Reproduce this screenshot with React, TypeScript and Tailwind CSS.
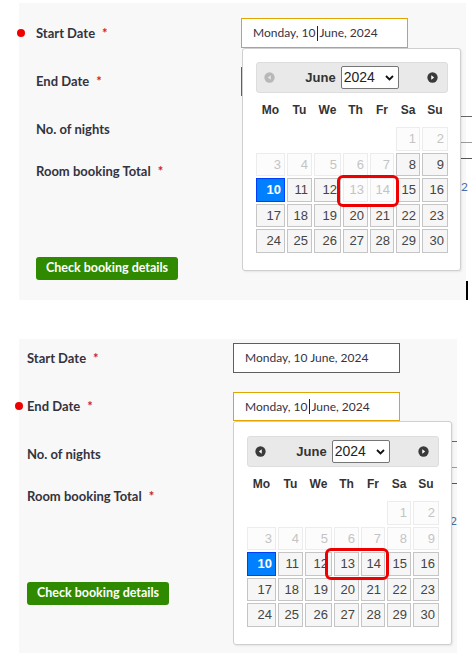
import React from 'react';

type Variant = 'start' | 'end';

const cells: (number | null)[] = [null, null, null, null, null, ...Array.from({ length: 30 }, (_, i) => i + 1)];
const dayNames = ['Mo', 'Tu', 'We', 'Th', 'Fr', 'Sa', 'Su'];

function CircleArrow({ dir, muted }: { dir: 'left' | 'right'; muted?: boolean }) {
  return (
    <svg width="11" height="11" viewBox="0 0 16 16">
      <circle cx="8" cy="8" r="7.5" fill={muted ? '#b8b8b8' : '#3a3a3a'} />
      {dir === 'left' ? (
        <path d="M9.8 4.6 L5.6 8 L9.8 11.4 Z" fill={muted ? '#e6e6e6' : '#fff'} />
      ) : (
        <path d="M6.2 4.6 L10.4 8 L6.2 11.4 Z" fill="#fff" />
      )}
    </svg>
  );
}

function DatePicker({ variant }: { variant: Variant }) {
  const isDisabled = (d: number) =>
    variant === 'start' ? d <= 7 || d === 13 || d === 14 : d <= 9;

  return (
    <div
      className={
        variant === 'start'
          ? 'absolute left-[1px] top-full z-10 w-[219px] h-[223px] bg-white border border-[#cfcfcf] rounded-[3px] pt-[13px] pl-[13px] shadow-[1px_1px_2px_rgba(0,0,0,0.08)]'
          : 'absolute left-0 top-full z-10 w-[219px] h-[224px] bg-white border border-[#cfcfcf] rounded-[3px] pt-[14px] pl-[13px] shadow-[1px_1px_2px_rgba(0,0,0,0.08)]'
      }
    >
      {/* header */}
      <div className="relative flex items-center justify-center w-[192px] h-[31px] bg-[#e9e9e9] border border-[#dddddd] rounded-[3px] font-['Liberation_Sans',Arial,sans-serif]">
        <span className="absolute left-[7px] top-[9px]">
          <CircleArrow dir="left" muted={variant === 'start'} />
        </span>
        <span className="text-[13px] font-bold text-[#333333] mr-[5px]">June</span>
        <div className="flex items-center justify-between w-[58px] h-[23px] bg-white border border-[#767676] rounded-[2px] pl-[2px] pr-[4px] text-[14px] text-[#222222]">
          <span>2024</span>
          <svg width="9" height="6" viewBox="0 0 9 6">
            <path d="M1 1 L4.5 4.5 L8 1" fill="none" stroke="#111" strokeWidth="1.8" />
          </svg>
        </div>
        <span className="absolute right-[9px] top-[9px]">
          <CircleArrow dir="right" />
        </span>
      </div>

      {/* week days */}
      <div className="grid grid-cols-[29px_25px_27px_25px_24px_24px_26px] gap-x-[2px] h-[34px] items-center font-['Liberation_Sans',Arial,sans-serif] text-[12px] font-bold text-[#333333]">
        {dayNames.map((d) => (
          <div key={d} className="text-center">
            {d}
          </div>
        ))}
      </div>

      {/* days */}
      <div className="grid grid-cols-[29px_25px_27px_25px_24px_24px_26px] gap-x-[2px] gap-y-[2px] auto-rows-[23.5px] font-['Liberation_Sans',Arial,sans-serif] text-[13px]">
        {cells.map((d, i) => {
          if (d === null) return <div key={i} />;
          let cls = 'border border-[#c5c5c5] bg-[#f6f6f6] text-[#454545]';
          if (d === 10) cls = 'border border-[#003eff] bg-[#007fff] text-white font-bold';
          else if (isDisabled(d)) cls = 'border border-[#ececec] bg-[#fcfcfc] text-[#c4c4c4]';
          return (
            <div key={i} className={'flex items-center justify-end pr-[3px] ' + cls}>
              {d}
            </div>
          );
        })}
      </div>

      {/* red annotation box */}
      <div
        className={
          variant === 'start'
            ? 'absolute left-[94px] top-[126px] w-[62px] h-[32px] border-[3px] border-[#ee0000] rounded-[6px]'
            : 'absolute left-[91px] top-[126px] w-[64px] h-[32px] border-[3px] border-[#ee0000] rounded-[6px]'
        }
      />
    </div>
  );
}

function DateInput({
  focused,
  tall,
  covered,
  children,
}: {
  focused?: boolean;
  tall?: boolean;
  covered?: boolean;
  children?: React.ReactNode;
}) {
  return (
    <div className="relative">
      <div
        className={
          (focused ? 'border-[#e2a500] ' : 'border-[#5f5f5f] ') +
          (tall ? 'h-[30px] ' : 'h-[29px] ') +
          "flex items-center w-[167px] bg-white border pl-[11px] font-['Lato',sans-serif] text-[12px] text-[#333344]"
        }
      >
        {covered ? null : focused ? (
          <>
            <span>Monday, 10</span>
            <span className="inline-block w-[1px] h-[15px] bg-[#222222] mx-[1.5px]" />
            <span>June, 2024</span>
          </>
        ) : (
          <span>Monday, 10 June, 2024</span>
        )}
      </div>
      {children}
    </div>
  );
}

function Label({ text, required, dot, dotClass }: { text: string; required?: boolean; dot?: boolean; dotClass?: string }) {
  return (
    <div className="relative font-['Lato',sans-serif] text-[13px] font-bold text-[#333340]">
      {dot && <span className={dotClass} />}
      {text}
      {required && <span className="ml-[7px] text-[#cc1f1f]">*</span>}
    </div>
  );
}

function BookingPanel({ variant }: { variant: Variant }) {
  const isStart = variant === 'start';
  const labelCol = isStart ? 'w-[205px] shrink-0' : 'w-[206px] shrink-0';
  const dotClass = isStart
    ? 'absolute left-[-19px] top-[5px] w-[8px] h-[8px] rounded-full bg-[#ee0000]'
    : 'absolute left-[-12px] top-[5px] w-[8px] h-[8px] rounded-full bg-[#ee0000]';
  // the parts of the form that lie under the date picker
  const hiddenBox = isStart ? 'w-[300px]' : 'w-[164px]';

  return (
    <div
      className={
        isStart
          ? 'relative ml-[19px] w-[447px] h-[297px] bg-[#f8f8f8] pt-[15px] pl-[17px]'
          : 'relative ml-[19px] w-[438px] h-[314px] bg-[#f8f8f8] pt-[4px] pl-[8px]'
      }
    >
      <div className="flex items-center h-[30px] pt-[2px]">
        <div className={labelCol}>
          <Label text="Start Date" required dot={isStart} dotClass={dotClass} />
        </div>
        <div className="relative z-20 -mt-[2px]">
          <DateInput focused={isStart} tall>
            {isStart && <DatePicker variant="start" />}
          </DateInput>
        </div>
      </div>

      <div className="flex items-center h-[29px] mt-[19px]">
        <div className={labelCol}>
          <Label text="End Date" required dot={!isStart} dotClass={dotClass} />
        </div>
        <div className="relative z-10">
          <DateInput focused={!isStart} covered={isStart}>
            {!isStart && <DatePicker variant="end" />}
          </DateInput>
        </div>
      </div>

      <div className="flex items-center h-[27px] mt-[20px]">
        <div className={labelCol}>
          <Label text="No. of nights" />
        </div>
        <div className={'ml-[60px] h-[27px] shrink-0 border-t border-b border-t-[#666666] border-b-[#9a9a9a] ' + hiddenBox} />
      </div>

      <div className="flex items-center h-[28px] mt-[15px]">
        <div className={labelCol}>
          <Label text="Room booking Total" required />
        </div>
        <div className={'relative ml-[60px] h-[28px] shrink-0 border-t border-t-[#555555] ' + hiddenBox}>
          <span
            className={
              isStart
                ? "absolute left-[160px] top-[19px] font-['Lato',sans-serif] text-[12px] text-[#4a6fa8]"
                : "absolute left-[157px] top-[28px] font-['Lato',sans-serif] text-[12px] text-[#4a6fa8]"
            }
          >
            2
          </span>
        </div>
      </div>

      <button
        type="button"
        className="mt-[71px] w-[142px] h-[23px] rounded-[3px] bg-[#2f8a00] text-white font-['Lato',sans-serif] text-[12.5px] font-bold"
      >
        Check booking details
      </button>

      {isStart && <div className="absolute right-[-2px] bottom-0 w-[2px] h-[19px] bg-black" />}
    </div>
  );
}

export default function App() {
  return (
    <div className="w-[472px] h-[653px] overflow-hidden bg-white pt-[3px]">
      <BookingPanel variant="start" />
      <div className="h-[39px]" />
      <BookingPanel variant="end" />
    </div>
  );
}
